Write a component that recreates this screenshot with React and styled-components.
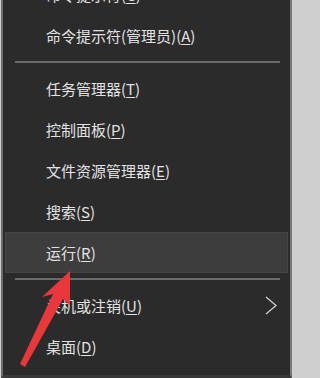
import React from "react";
import styled, { createGlobalStyle } from "styled-components";

const GlobalStyle = createGlobalStyle`
	html, body {
		margin: 0;
		padding: 0;
		background: #cfcfcf;
		overflow: hidden;
	}
	body {
		font-family: "Noto Sans CJK SC", "Noto Sans", sans-serif;
	}
`;

const Frame = styled.div`
	position: relative;
	width: 294px;
	height: 378px;
	padding: 0 2px 0 1px;
	box-sizing: border-box;
	overflow: hidden;
`;

const Menu = styled.div`
	height: 378px;
	box-sizing: border-box;
	background: #2b2b2b;
	border-left: 2px solid #6c6c6c;
	border-right: 2px solid #7a7a7a;
	border-bottom: 3px solid #383838;
	padding: 0 2px;
	overflow: hidden;
`;

const List = styled.ul`
	list-style: none;
	margin: -26px 0 0;
	padding: 0;
`;

const Item = styled.li`
	display: flex;
	align-items: center;
	justify-content: space-between;
	height: 41px;
	box-sizing: border-box;
	padding: 0 9px 0 40px;
	font-size: 15px;
	color: #e2e2e2;
	background: ${(p) => (p.$active ? "#3d3d3d" : "transparent")};
	border: 1px solid ${(p) => (p.$active ? "#464646" : "transparent")};
`;

const Key = styled.span`
	text-decoration: underline;
	text-underline-offset: 2px;
`;

const Separator = styled.li`
	padding: 5px 8px 5px 10px;

	&::before {
		content: "";
		display: block;
		height: 2px;
		background: #6a6a6a;
	}
`;

const Chevron = () => (
	<svg width="14" height="19" viewBox="0 0 14 19">
		<polyline
			points="2,1 12,9.5 2,18"
			fill="none"
			stroke="#cfcfcf"
			strokeWidth="1.3"
		/>
	</svg>
);

const Arrow = styled.svg`
	position: absolute;
	left: 0;
	top: 0;
	pointer-events: none;
`;

const items = [
	{ label: "命令提示符", key: "C" },
	{ label: "命令提示符(管理员)", key: "A" },
	"sep",
	{ label: "任务管理器", key: "T" },
	{ label: "控制面板", key: "P" },
	{ label: "文件资源管理器", key: "E" },
	{ label: "搜索", key: "S" },
	{ label: "运行", key: "R", active: true },
	"sep",
	{ label: "关机或注销", key: "U", sub: true },
	{ label: "桌面", key: "D" },
];

export default function App() {
	return (
		<>
			<GlobalStyle />
			<Frame>
				<Menu>
					<List>
						{items.map((item, i) =>
							item === "sep" ? (
								<Separator key={i} />
							) : (
								<Item key={i} $active={item.active}>
									<span>
										{item.label}(<Key>{item.key}</Key>)
									</span>
									{item.sub && <Chevron />}
								</Item>
							)
						)}
					</List>
				</Menu>
				{/* red annotation arrow */}
				<Arrow width="294" height="378" viewBox="0 0 294 378">
					<polygon
						points="70,271 70,305 63,299 25,367 20,364 53,294 42,297"
						fill="#e8383b"
					/>
				</Arrow>
			</Frame>
		</>
	);
}
